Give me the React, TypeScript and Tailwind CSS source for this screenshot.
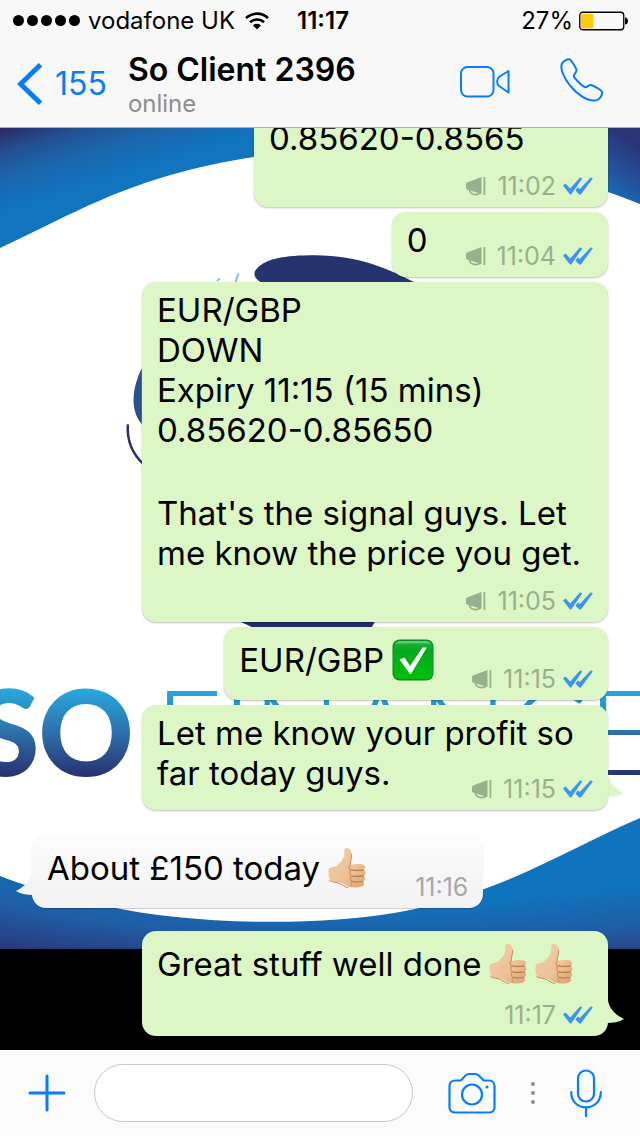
import React from 'react';

interface Message {
  paragraphs: string[][];
  time: string;
  incoming?: boolean;
  broadcast?: boolean;
  tail?: boolean;
  // where the time goes: beside the text, under it, or tucked up next to the last line
  meta?: 'beside' | 'below' | 'tucked';
  emoji?: 'check' | 'thumb' | 'thumbs';
  className?: string;
}

const messages: Message[] = [
  { paragraphs: [['0.85620-0.8565']], time: '11:02', broadcast: true, className: 'w-[354px]' },
  { paragraphs: [['0']], time: '11:04', broadcast: true, meta: 'beside' },
  {
    paragraphs: [
      ['EUR/GBP', 'DOWN', 'Expiry 11:15 (15 mins)', '0.85620-0.85650'],
      ["That's the signal guys. Let", 'me know the price you get.'],
    ],
    time: '11:05',
    broadcast: true,
    className: 'w-[466px]',
  },
  { paragraphs: [['EUR/GBP']], emoji: 'check', time: '11:15', broadcast: true, meta: 'beside' },
  {
    paragraphs: [['Let me know your profit so', 'far today guys.']],
    time: '11:15',
    broadcast: true,
    meta: 'tucked',
    tail: true,
    className: 'w-[466px]',
  },
  {
    paragraphs: [['About £150 today']],
    emoji: 'thumb',
    time: '11:16',
    incoming: true,
    tail: true,
    meta: 'beside',
    className: 'mt-5',
  },
  { paragraphs: [['Great stuff well done']], emoji: 'thumbs', time: '11:17', tail: true, className: 'mt-[18px] w-[466px]' },
];

const metaSpacing = {
  beside: '',
  below: 'mt-4',
  tucked: '-mt-4',
};

function WifiIcon() {
  return (
    <svg className="h-[18px] w-6" viewBox="0 0 24 18" fill="none" stroke="#000" strokeWidth="2.6">
      <path d="M1 6.2a15.6 15.6 0 0 1 22 0" />
      <path d="M5 10.3a10 10 0 0 1 14 0" />
      <path d="M8 13.3a5.7 5.7 0 0 1 8 0l-4 4.2z" fill="#000" stroke="none" />
    </svg>
  );
}

function Megaphone() {
  return (
    <svg className="h-5 w-5" viewBox="0 0 20 20" fill="#9ab08c">
      <path d="M0 7.5 1 6.600 15.500 1v17L1 13.600l-1-1z" />
      <rect x="17.500" y="1" width="1.800" height="18" />
      <path d="M3.500 14c.6 5 8.500 6 10.500 2.500" fill="none" stroke="#9ab08c" strokeWidth="1.8" />
    </svg>
  );
}

function Ticks() {
  return (
    <svg className="h-[18px] w-[30px]" viewBox="0 0 30 18" fill="#3b93f3">
      <path d="M0 8.500 2.600 6.600l4.600 4.800L17.200.3l2 1.100L8.200 17.500H7z" />
      <path d="M12.500 13.700 14.800 10.200l2 1.800L27.800.3l2 1.100L17.800 17.500h-1.400z" />
    </svg>
  );
}

function CheckEmoji() {
  return (
    <svg role="img" aria-label="check mark" className="ml-2 inline-block h-[42px] w-[42px]" viewBox="0 0 42 42">
      <defs>
        <linearGradient id="checkFill" x1="0" y1="0" x2="0" y2="1">
          <stop offset="0" stopColor="#22b53c" />
          <stop offset=".25" stopColor="#05a91c" />
          <stop offset="1" stopColor="#00c008" />
        </linearGradient>
      </defs>
      <rect x=".5" y=".5" width="41" height="41" rx="7" fill="#0b8a24" />
      <rect x="1.500" y="2" width="39" height="38" rx="6" fill="url(#checkFill)" />
      <path d="M3 5c1-2 3-3 6-3h24c3 0 5 1 6 3-3-1-33-1-36 0z" fill="#7fd98c" opacity=".7" />
      <path d="m7.500 20.500 5-2 5.500 8.500L30.500 8.500h4.300L19 35h-1z" fill="#fff" />
    </svg>
  );
}

function ThumbEmoji() {
  return (
    <svg role="img" aria-label="thumbs up" className="ml-2 inline-block h-[42px] w-[38px]" viewBox="0 0 38 42">
      <defs>
        <linearGradient id="skin" x1="0" y1="0" x2="1" y2="1">
          <stop offset="0" stopColor="#f3cfa8" />
          <stop offset=".6" stopColor="#edc199" />
          <stop offset="1" stopColor="#dba273" />
        </linearGradient>
      </defs>
      <path
        d="M.8 21.500c3-1.800 7-1.500 9.500-4 2.800-3 6-6.500 6-10.500 0-3-.6-6 2.200-6 4.300 0 5.500 4 5.200 8.500-.3 3-1.700 5.500-1.500 8.500 3.500-1 9-1.500 12.500-.6 3.200.9 3 4.600.8 5.500 2.800 1 2.500 5 .2 6 2 1 1.700 4.800-.5 5.500 1.500 1 1 4.500-1.500 5-3.500 1.200-8.500 1.400-12 .6-4-1-6.500-4-10.500-4.500-4-.3-7.500-.5-9-2.500C.3 30.500.3 25 .8 21.500z"
        fill="url(#skin)"
      />
      <path
        d="M23 22.800c4 .8 9 .8 12.800.1M23.500 28.800c4 .8 8.500.7 12.200.1M24 34.400c3.600.8 7.500.7 11 .1"
        fill="none"
        stroke="#b97c45"
        strokeWidth="1.200"
      />
      <path
        d="M22.500 18c-2.500 1.200-1.500 4 .5 4.800-2 1.800-1.500 4.800.5 6-1.800 1.600-1.200 4.600.5 5.600-1.500 1.400-.8 4 .5 4.800"
        fill="none"
        stroke="#cf9560"
        strokeWidth="1.200"
      />
      <path d="M23.600 7c.4 4-1.600 7-1.400 11M1.500 33.500c3 2 7 1.500 10 3s5 3.500 8.500 4" fill="none" stroke="#c68d58" />
    </svg>
  );
}

function Wallpaper() {
  return (
    <svg
      className="absolute inset-0 h-full w-full"
      viewBox="0 128 640 921"
      preserveAspectRatio="xMidYMin slice"
      aria-hidden="true"
    >
      <defs>
        <linearGradient id="topLeft" x1="0" y1="128" x2="24" y2="206" gradientUnits="userSpaceOnUse">
          <stop offset="0" stopColor="#2b2763" />
          <stop offset=".3" stopColor="#234f93" />
          <stop offset=".6" stopColor="#1b66ab" />
          <stop offset="1" stopColor="#1074bf" />
        </linearGradient>
        <linearGradient id="topRight" x1="636" y1="145" x2="600" y2="195" gradientUnits="userSpaceOnUse">
          <stop offset="0" stopColor="#293577" />
          <stop offset=".5" stopColor="#25509a" />
          <stop offset="1" stopColor="#1175bd" />
        </linearGradient>
        <radialGradient id="bottom" cx=".6" cy=".1" r="1.1">
          <stop offset=".5" stopColor="#1073bd" />
          <stop offset=".75" stopColor="#205ca3" />
          <stop offset="1" stopColor="#2b3478" />
        </radialGradient>
        <linearGradient id="brand" x1="0" y1="688" x2="0" y2="776" gradientUnits="userSpaceOnUse">
          <stop offset="0" stopColor="#28a9e0" />
          <stop offset=".5" stopColor="#2d70aa" />
          <stop offset="1" stopColor="#29306f" />
        </linearGradient>
      </defs>
      <rect y="128" width="640" height="921" fill="#fff" />
      <path d="M0 128h300v23l-46 6C130 176 75 214 0 248z" fill="url(#topLeft)" />
      <path d="M500 128h140v76c-50-20-90-30-140-38z" fill="url(#topRight)" />
      <path d="M255 271c8-13 30-16 60-16 44 0 75 14 105 30l-140 5c-15-5-28-10-25-19z" fill="#25336f" />
      <path d="M142 368c-10 20-12 42 0 56z" fill="#2c4f8d" />
      <path d="M128 424c-1 16 5 30 16 40" fill="none" stroke="#29326f" strokeWidth="2.500" />
      <path d="M217 281l3-3M236 282c0-3 1-6 3-9" stroke="#8cc3e2" strokeWidth="2" />
      <path d="M240 621h135l-4 7H255z" fill="#242d68" />
      <g fontFamily="Lato, sans-serif" fill="url(#brand)">
        <text x="-25" y="774" fontWeight="700" fontSize="117" stroke="url(#brand)" strokeWidth="2">
          SO
        </text>
        <text x="656" y="774" textAnchor="end" fontWeight="300" fontSize="118">
          FINANCE
        </text>
      </g>
      <path d="M0 875c60 23 150 46 270 46 100 0 160-13 212-32 58-21 108-51 158-72v132H0z" fill="url(#bottom)" />
      <rect y="948" width="640" height="101" fill="#000" />
    </svg>
  );
}

function Bubble({ message }: { message: Message }) {
  const { paragraphs, time, incoming, broadcast, tail, meta = 'below', emoji, className = '' } = message;
  const beside = meta === 'beside';

  return (
    <li
      className={`relative flex shrink-0 rounded-[14px] px-[15px] pb-[9px] ${emoji ? 'pt-[10px]' : 'pt-2'} ${
        incoming
          ? 'self-start bg-linear-to-b from-[#fcfcfc] to-[#f2f2f2] shadow-[0_1px_1px_rgba(0,0,0,0.2)]'
          : 'self-end bg-[#dcf7c5] shadow-[0_1px_2px_rgba(0,0,0,0.25)]'
      } ${beside ? 'flex-row items-end justify-between gap-[38px]' : 'flex-col'} ${className}`}
    >
      <div
        className={`flex flex-col gap-[43px] whitespace-nowrap text-[33px] text-black ${
          emoji ? 'leading-[46px]' : 'leading-[40px]'
        } ${beside ? 'pb-2' : ''}`}
      >
        {paragraphs.map((lines, i) => (
          <p key={i} className={emoji ? 'flex items-center' : ''}>
            {lines.map((line) => (
              <span key={line} className="block">{line}</span>
            ))}
            {emoji === 'check' && <CheckEmoji />}
            {emoji?.startsWith('thumb') && <ThumbEmoji />}
            {emoji === 'thumbs' && <ThumbEmoji />}
          </p>
        ))}
      </div>
      <div className={`flex items-center justify-end ${metaSpacing[meta]}`}>
        {broadcast && <Megaphone />}
        <time className={`ml-[11px] text-[25px] leading-6 ${incoming ? 'text-[#a8a8a8]' : 'text-[#9ab08c]'}`}>
          {time}
        </time>
        {!incoming && <span className="ml-[7px]"><Ticks /></span>}
      </div>
      {tail && (
        <svg
          className={`absolute bottom-2 h-7 w-[18px] ${incoming ? '-left-[17px] -scale-x-100' : '-right-[17px]'}`}
          viewBox="0 0 18 28"
          fill={incoming ? '#f4f4f4' : '#dcf7c5'}
        >
          <path d="M0 0h1c1 9 8 15 16 19-5 3-11 4-17 4z" />
        </svg>
      )}
    </li>
  );
}

export default function App() {
  return (
    <div className="flex h-screen flex-col overflow-hidden bg-white font-['Inter',sans-serif]">
      <header className="relative z-10 border-b border-[#b2b2b2] bg-[#f8f8f8]">
        <div className="flex h-[41px] items-center justify-between pr-[11px] pl-[13px] text-2xl text-black">
          <div className="flex items-center">
            <div className="flex gap-[3px]">
              {[0, 1, 2, 3, 4].map((dot) => (
                <span key={dot} className="size-[11px] rounded-full bg-black" />
              ))}
            </div>
            <span className="mr-2.5 ml-2">vodafone UK</span>
            <WifiIcon />
            <time className="ml-7 font-semibold">11:17</time>
          </div>
          <div className="flex items-center gap-1.5">
            <span>27%</span>
            <svg className="h-5 w-[50px]" viewBox="0 0 50 20">
              <rect x=".75" y="1.250" width="44" height="17.500" rx="3" fill="none" stroke="#000" strokeWidth="1.300" />
              <rect x="2" y="3" width="12.500" height="14.500" rx="1" fill="#fccc0c" />
              <path d="M46 6.500c4 0 4 7 0 7z" />
            </svg>
          </div>
        </div>
        <div className="flex h-[86px] items-center pr-9 pl-[17px]">
          <button aria-label="Back" className="flex items-center gap-3 text-[#087dfb]">
            <svg className="h-[42px] w-[26px]" viewBox="0 0 26 42" fill="none" stroke="currentColor" strokeWidth="5">
              <path d="M23.500 1.800 3.500 21l20 19.200" />
            </svg>
            <span className="text-[32px]">155</span>
          </button>
          <div className="ml-[21px] flex-1 pt-1">
            <h1 className="text-[32px] leading-9 font-semibold text-black">So Client 2396</h1>
            <p className="text-2xl leading-8 text-[#8e8e8e]">online</p>
          </div>
          <div className="mb-2 flex items-center gap-[50px] text-[#087dfb]">
            <button aria-label="Video call" className="mt-1">
              <svg className="block h-8 w-[50px]" viewBox="0 0 50 32" fill="none" stroke="currentColor" strokeWidth="2">
                <rect x="1" y="1" width="32.500" height="29.500" rx="6.500" />
                <path d="M48.500 5v21.500L39 20c-2.500-2-2.500-7 0-9z" strokeLinejoin="round" />
              </svg>
            </button>
            <button aria-label="Call">
              <svg
                className="block size-11"
                viewBox="0 0 44 44"
                fill="none"
                stroke="currentColor"
                strokeWidth="2"
                strokeLinejoin="round"
              >
                <path d="M2 5.500C3.500 3 7 1 9.500 1.300c1.600.4 5.800 7.600 7 10.200.8 2-2.800 4.500-2.700 6.500.5 2.500 8.700 10.300 11.200 11.200 2 .5 3.800-2.600 6-2.200 2.500.6 10 4.800 11 6.800 1 3-2.500 8.200-6.500 8.700-9 1-19-7-25.500-15C4 19.500-.5 11.500 2 5.500z" />
              </svg>
            </button>
          </div>
        </div>
      </header>

      <main className="relative flex-1 overflow-hidden">
        <Wallpaper />
        <ul className="relative flex h-full flex-col justify-end gap-[5px] px-8 pb-[14px]">
          {messages.map((message, i) => (
            <Bubble key={i} message={message} />
          ))}
        </ul>
      </main>

      <footer className="flex h-[86px] items-center bg-[#fbfbfb] pr-[38px] pl-7 text-[#087dfb]">
        <button aria-label="Attach">
          <svg className="block size-[38px]" viewBox="0 0 38 38" stroke="currentColor" strokeWidth="3" strokeLinecap="round">
            <path d="M19 2v34M2 19h34" />
          </svg>
        </button>
        <input
          aria-label="Message"
          className="mr-[35px] ml-7 h-[58px] min-w-0 flex-1 rounded-full border border-[#c9c9c9] bg-white px-6 text-[33px] text-black outline-none"
        />
        <button aria-label="Camera">
          <svg className="block h-[42px] w-12" viewBox="0 0 48 42" fill="none" stroke="currentColor" strokeWidth="2.200">
            <path d="M7.500 8.500h5c2.500-1 4-6 8-6.500h7.500c4 .5 5.500 5.500 8 6.500h5c3 0 5.500 2 5.500 5.500v21.500c0 3-2.500 5-5.500 5H7.500c-3.500 0-6-2-6-5V14c0-3.500 2.500-5.500 6-5.500z" />
            <circle cx="24" cy="22.500" r="10" />
            <circle cx="39" cy="15" r="1.500" fill="currentColor" stroke="none" />
          </svg>
        </button>
        <div className="mx-[35px] flex flex-col gap-[5px]">
          <span className="size-1 rounded-full bg-[#8e8e93]" />
          <span className="size-1 rounded-full bg-[#8e8e93]" />
          <span className="size-1 rounded-full bg-[#8e8e93]" />
        </div>
        <button aria-label="Record voice message">
          <svg
            className="block h-12 w-8"
            viewBox="0 0 32 48"
            fill="none"
            stroke="currentColor"
            strokeWidth="2.200"
            strokeLinecap="round"
          >
            <rect x="8" y="1.500" width="16" height="31" rx="8" />
            <path d="M1.200 23c0 20.500 29.600 20.500 29.600 0M16 38.500V47" />
          </svg>
        </button>
      </footer>
    </div>
  );
}
